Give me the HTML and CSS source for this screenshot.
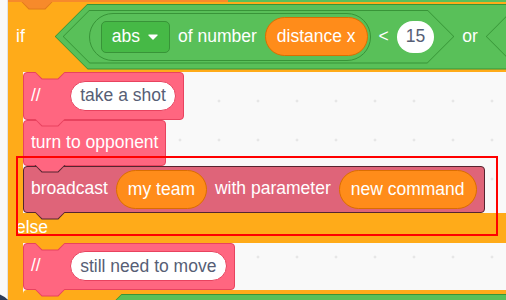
FILE: index.html
```html
<!DOCTYPE html>
<html lang="en">
<head>
    <meta charset="UTF-8">
    <meta name="viewport" content="width=device-width, initial-scale=1.0">
    <title>Script</title>
    <link rel="stylesheet" href="styles.css">
</head>
<body>
    <div class="script">
        <div class="prev tab"><span class="prev-green"></span></div>

        <div class="arm arm-if tab">
            <span class="kw">if</span>
            <div class="hex hex-or">
                <div class="hex-fill">
                    <div class="hex hex-lt">
                        <div class="hex-fill">
                            <div class="reporter">
                                <span class="dropdown">abs
                                    <svg width="10" height="6" viewBox="0 0 10 6"><path d="M1 .4h8a.7.7 0 0 1 .5 1.2L5.5 5.5a.7.7 0 0 1-1 0L.5 1.6A.7.7 0 0 1 1 .4z" fill="#fff"/></svg>
                                </span>
                                <span class="label">of number</span>
                                <span class="pill pill-var">distance x</span>
                            </div>
                            <span class="label">&lt;</span>
                            <span class="pill pill-num">15</span>
                        </div>
                    </div>
                    <span class="label">or</span>
                    <div class="hex hex-next"><div class="hex-fill"></div></div>
                </div>
            </div>
        </div>

        <div class="mouth">
            <div class="block comment tab">
                <span class="slashes">//</span>
                <span class="pill pill-note">take a shot</span>
            </div>
            <div class="block turn tab">
                <span class="label">turn to opponent</span>
            </div>
            <div class="block broadcast tab">
                <span class="label">broadcast</span>
                <span class="pill pill-var">my team</span>
                <span class="label">with parameter</span>
                <span class="pill pill-var">new command</span>
            </div>
        </div>

        <div class="arm arm-else tab">
            <span class="kw">else</span>
        </div>

        <div class="mouth">
            <div class="block comment comment-2 tab">
                <span class="slashes">//</span>
                <span class="pill pill-note">still need to move</span>
            </div>
            <div class="arm arm-next">
                <div class="hex hex-wide"><div class="hex-fill"></div></div>
            </div>
        </div>
    </div>

    <div class="zoom-btn"></div>
    <div class="highlight"></div>
</body>
</html>
```

FILE: styles.css
```css
*{
    box-sizing: border-box;
}
body{
    margin: 0;
    width: 506px;
    height: 300px;
    overflow: hidden;
    position: relative;
    font-family: "Liberation Sans", Arial, sans-serif;
    font-size: 17.5px;
    color: #fff;
    background-color: #f9f9f9;
    background-image: radial-gradient(circle, #d9d9d9 0.8px, transparent 1.4px);
    background-size: 39px 39px;
    background-position: 4.5px 3.5px;
}
.script{
    margin-left: 7px;
    border-left: 1px solid #e2e2e2;
    height: 300px;
    display: flex;
    flex-direction: column;
}

/* tabs under each block */
.tab{
    position: relative;
    --fill: #ffab19;
    --line: #e8435f;
    --tab-left: 27px;
}
.tab::before,
.tab::after{
    content: '';
    position: absolute;
    top: 100%;
    clip-path: polygon(0 0, 100% 0, 76% 100%, 24% 100%);
    z-index: 2;
}
.tab::before{
    left: calc(var(--tab-left) - 1px);
    width: 32px;
    height: 8px;
    background: var(--line);
}
.tab::after{
    left: var(--tab-left);
    width: 30px;
    height: 7px;
    background: var(--fill);
}

.prev{
    height: 4px;
    display: flex;
    background: #f78a2b;
    --fill: #f78a2b;
    --line: #e07a1c;
    --tab-left: 14px;
}
.prev-green{
    margin-left: 220px;
    flex: 1;
    height: 1.5px;
    background: #59c059;
}

.arm{
    display: flex;
    align-items: center;
    background: #ffab19;
    padding-left: 8px;
    flex-shrink: 0;
}
.arm-if{
    height: 70px;
}
.arm-else{
    height: 30px;
}
.arm-next{
    align-self: stretch;
    height: 40px;
    align-items: flex-start;
    padding-top: 4px;
    padding-left: 72px;
    border-radius: 4px 0 0 0;
}
.kw{
    line-height: 1;
}

/* hexagon slots */
.hex{
    flex-shrink: 0;
    padding: 1px;
    background: #389438;
    clip-path: polygon(0 50%, var(--p) 0, calc(100% - var(--p)) 0, 100% 50%, calc(100% - var(--p)) 100%, var(--p) 100%);
}
.hex-fill{
    display: flex;
    align-items: center;
    gap: 8px;
    height: 100%;
    background: #59c059;
    clip-path: polygon(0 50%, var(--q) 0, calc(100% - var(--q)) 0, 100% 50%, calc(100% - var(--q)) 100%, var(--q) 100%);
}
.hex-or{
    --p: 33px;
    --q: 32px;
    height: 66px;
    margin-left: 30px;
}
.hex-or > .hex-fill{
    padding-left: 7px;
}
.hex-lt{
    --p: 27px;
    --q: 26px;
    height: 54px;
}
.hex-lt > .hex-fill{
    padding-left: 25px;
    padding-right: 19px;
}
.hex-next{
    --p: 27px;
    --q: 26px;
    height: 54px;
    width: 200px;
}
.hex-wide{
    --p: 27px;
    --q: 26px;
    height: 54px;
    width: 500px;
}

.reporter{
    display: flex;
    align-items: center;
    gap: 8px;
    height: 48px;
    padding: 0 2px 0 11px;
    border: 1px solid #389438;
    border-radius: 24px;
}
.dropdown{
    display: flex;
    align-items: center;
    gap: 8px;
    height: 32px;
    padding: 0 11px 0 10px;
    background: #46b946;
    border: 1px solid #389438;
    border-radius: 5px;
}
.label,
.slashes{
    white-space: nowrap;
    line-height: 1;
}

.pill{
    display: flex;
    align-items: center;
    justify-content: center;
    white-space: nowrap;
    border-radius: 20px;
}
.pill-var{
    height: 39px;
    padding: 0 11px;
    background: #ff8c1a;
    border: 1px solid #db6e00;
}
.pill-num{
    height: 32px;
    padding: 0 9px;
    background: #fff;
    color: #575e75;
    border-radius: 16px;
}
.pill-note{
    height: 30px;
    padding: 0 9.5px;
    background: #fff;
    color: #575e75;
    border: 1px solid #e8435f;
    border-radius: 15px;
}

.mouth{
    display: flex;
    flex-direction: column;
    align-items: flex-start;
    padding-left: 15px;
    background: linear-gradient(to right, #ffab19 15px, transparent 15px);
    flex-shrink: 0;
}

.block{
    display: flex;
    align-items: center;
    gap: 8px;
    padding: 0 7px;
    border-radius: 4px;
    background: #ff6680;
    border: 1px solid #e8435f;
    --fill: #ff6680;
    --line: #e8435f;
    --tab-left: 11px;
    flex-shrink: 0;
}
.comment{
    height: 48px;
}
.comment .pill-note{
    margin-left: 21px;
}
.comment-2{
    height: 47px;
}
.turn{
    height: 46px;
    --line: #552530;
}
.broadcast{
    height: 47px;
    background: #df6479;
    border-color: #552530;
    --fill: #df6479;
    --line: #552530;
}

.zoom-btn{
    position: absolute;
    left: -30px;
    top: 293px;
    width: 44px;
    height: 44px;
    border-radius: 50%;
    background: #2e3c58;
}
.highlight{
    position: absolute;
    left: 16px;
    top: 156px;
    width: 482px;
    height: 80px;
    border: 2px solid #ff0000;
    z-index: 5;
}
```
